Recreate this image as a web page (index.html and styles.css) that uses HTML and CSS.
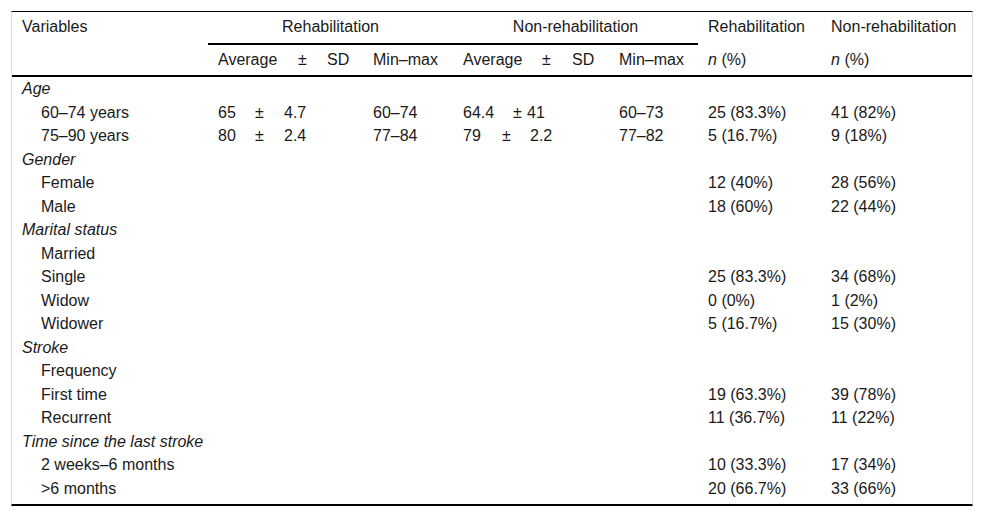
FILE: index.html
```html
<!DOCTYPE html>
<html lang="en">
<head>
<meta charset="utf-8">
<title>Table</title>
<link rel="stylesheet" href="styles.css">
</head>
<body>
<div class="table-wrap">
  <table class="data-table">
    <colgroup>
      <col class="c-var">
      <col class="c-avg"><col class="c-pm"><col class="c-sd"><col class="c-mm">
      <col class="c-avg2"><col class="c-pm2"><col class="c-sd2"><col class="c-mm2">
      <col class="c-reh"><col class="c-non">
    </colgroup>
    <thead>
      <tr class="head-1">
        <th>Variables</th>
        <th colspan="4" class="group">Rehabilitation</th>
        <th colspan="4" class="group">Non-rehabilitation</th>
        <th>Rehabilitation</th>
        <th>Non-rehabilitation</th>
      </tr>
      <tr class="head-2">
        <th></th>
        <th>Average</th><th>±</th><th>SD</th><th>Min–max</th>
        <th>Average</th><th>±</th><th>SD</th><th>Min–max</th>
        <th><i>n</i> (%)</th>
        <th><i>n</i> (%)</th>
      </tr>
    </thead>
    <tbody>
      <tr><td class="cat" colspan="11">Age</td></tr>
      <tr>
        <td class="sub">60–74 years</td>
        <td colspan="3"><span class="mean">65</span><span class="pm">±</span>4.7</td>
        <td>60–74</td>
        <td colspan="3"><span class="mean mean-wide">64.4</span><span class="pm pm-tight">±</span>41</td>
        <td>60–73</td>
        <td>25 (83.3%)</td>
        <td>41 (82%)</td>
      </tr>
      <tr>
        <td class="sub">75–90 years</td>
        <td colspan="3"><span class="mean">80</span><span class="pm">±</span>2.4</td>
        <td>77–84</td>
        <td colspan="3"><span class="mean mean-mid">79</span><span class="pm pm-mid">±</span>2.2</td>
        <td>77–82</td>
        <td>5 (16.7%)</td>
        <td>9 (18%)</td>
      </tr>
      <tr><td class="cat" colspan="11">Gender</td></tr>
      <tr><td class="sub">Female</td><td colspan="8"></td><td>12 (40%)</td><td>28 (56%)</td></tr>
      <tr><td class="sub">Male</td><td colspan="8"></td><td>18 (60%)</td><td>22 (44%)</td></tr>
      <tr><td class="cat" colspan="11">Marital status</td></tr>
      <tr><td class="sub">Married</td><td colspan="8"></td><td></td><td></td></tr>
      <tr><td class="sub">Single</td><td colspan="8"></td><td>25 (83.3%)</td><td>34 (68%)</td></tr>
      <tr><td class="sub">Widow</td><td colspan="8"></td><td>0 (0%)</td><td>1 (2%)</td></tr>
      <tr><td class="sub">Widower</td><td colspan="8"></td><td>5 (16.7%)</td><td>15 (30%)</td></tr>
      <tr><td class="cat" colspan="11">Stroke</td></tr>
      <tr><td class="sub">Frequency</td><td colspan="8"></td><td></td><td></td></tr>
      <tr><td class="sub">First time</td><td colspan="8"></td><td>19 (63.3%)</td><td>39 (78%)</td></tr>
      <tr><td class="sub">Recurrent</td><td colspan="8"></td><td>11 (36.7%)</td><td>11 (22%)</td></tr>
      <tr><td class="cat" colspan="11">Time since the last stroke</td></tr>
      <tr><td class="sub">2 weeks–6 months</td><td colspan="8"></td><td>10 (33.3%)</td><td>17 (34%)</td></tr>
      <tr><td class="sub">&gt;6 months</td><td colspan="8"></td><td>20 (66.7%)</td><td>33 (66%)</td></tr>
    </tbody>
  </table>
</div>
</body>
</html>
```

FILE: styles.css
```css
html, body {
  margin: 0;
  padding: 0;
  background: #ffffff;
}

body {
  font-family: "Liberation Sans", Arial, sans-serif;
  font-size: 16px;
  color: #1a1a1a;
}

.table-wrap {
  margin: 11px 0 0 11px;
  width: 960px;
  border-top: 1px solid #000;
  border-bottom: 2px solid #000;
  border-left: 1px solid #e2e2e2;
  border-right: 1px solid #e2e2e2;
  padding-bottom: 4px;
}

.data-table {
  width: 960px;
  table-layout: fixed;
  border-collapse: separate;
  border-spacing: 0;
}

.c-var { width: 196px; }
.c-avg { width: 80px; }
.c-pm { width: 29px; }
.c-sd { width: 46px; }
.c-mm { width: 90px; }
.c-avg2 { width: 79px; }
.c-pm2 { width: 30px; }
.c-sd2 { width: 47px; }
.c-mm2 { width: 89px; }
.c-reh { width: 123px; }
.c-non { width: 151px; }

th, td {
  text-align: left;
  vertical-align: top;
  font-weight: normal;
  white-space: nowrap;
  padding-left: 10px;
  padding-right: 0;
}

.head-1 th {
  padding-top: 4.5px;
  padding-bottom: 8.5px;
  line-height: 20px;
}

.head-1 th.group {
  text-align: center;
  padding-left: 0;
  padding-bottom: 6.5px;
  border-bottom: 2px solid #000;
}

.head-2 th {
  padding-top: 4.5px;
  padding-bottom: 5.5px;
  line-height: 20px;
  border-bottom: 2px solid #000;
}

tbody td {
  line-height: 19.5px;
  padding-top: 2px;
  padding-bottom: 2px;
}

tbody td.cat {
  font-style: italic;
}

tbody td.sub {
  padding-left: 29px;
}

.mean {
  display: inline-block;
  width: 37px;
}

.pm {
  display: inline-block;
  width: 29px;
}

.mean-wide { width: 50px; }
.pm-tight { width: 14px; }
.mean-mid { width: 39px; }
.pm-mid { width: 28px; }
```
